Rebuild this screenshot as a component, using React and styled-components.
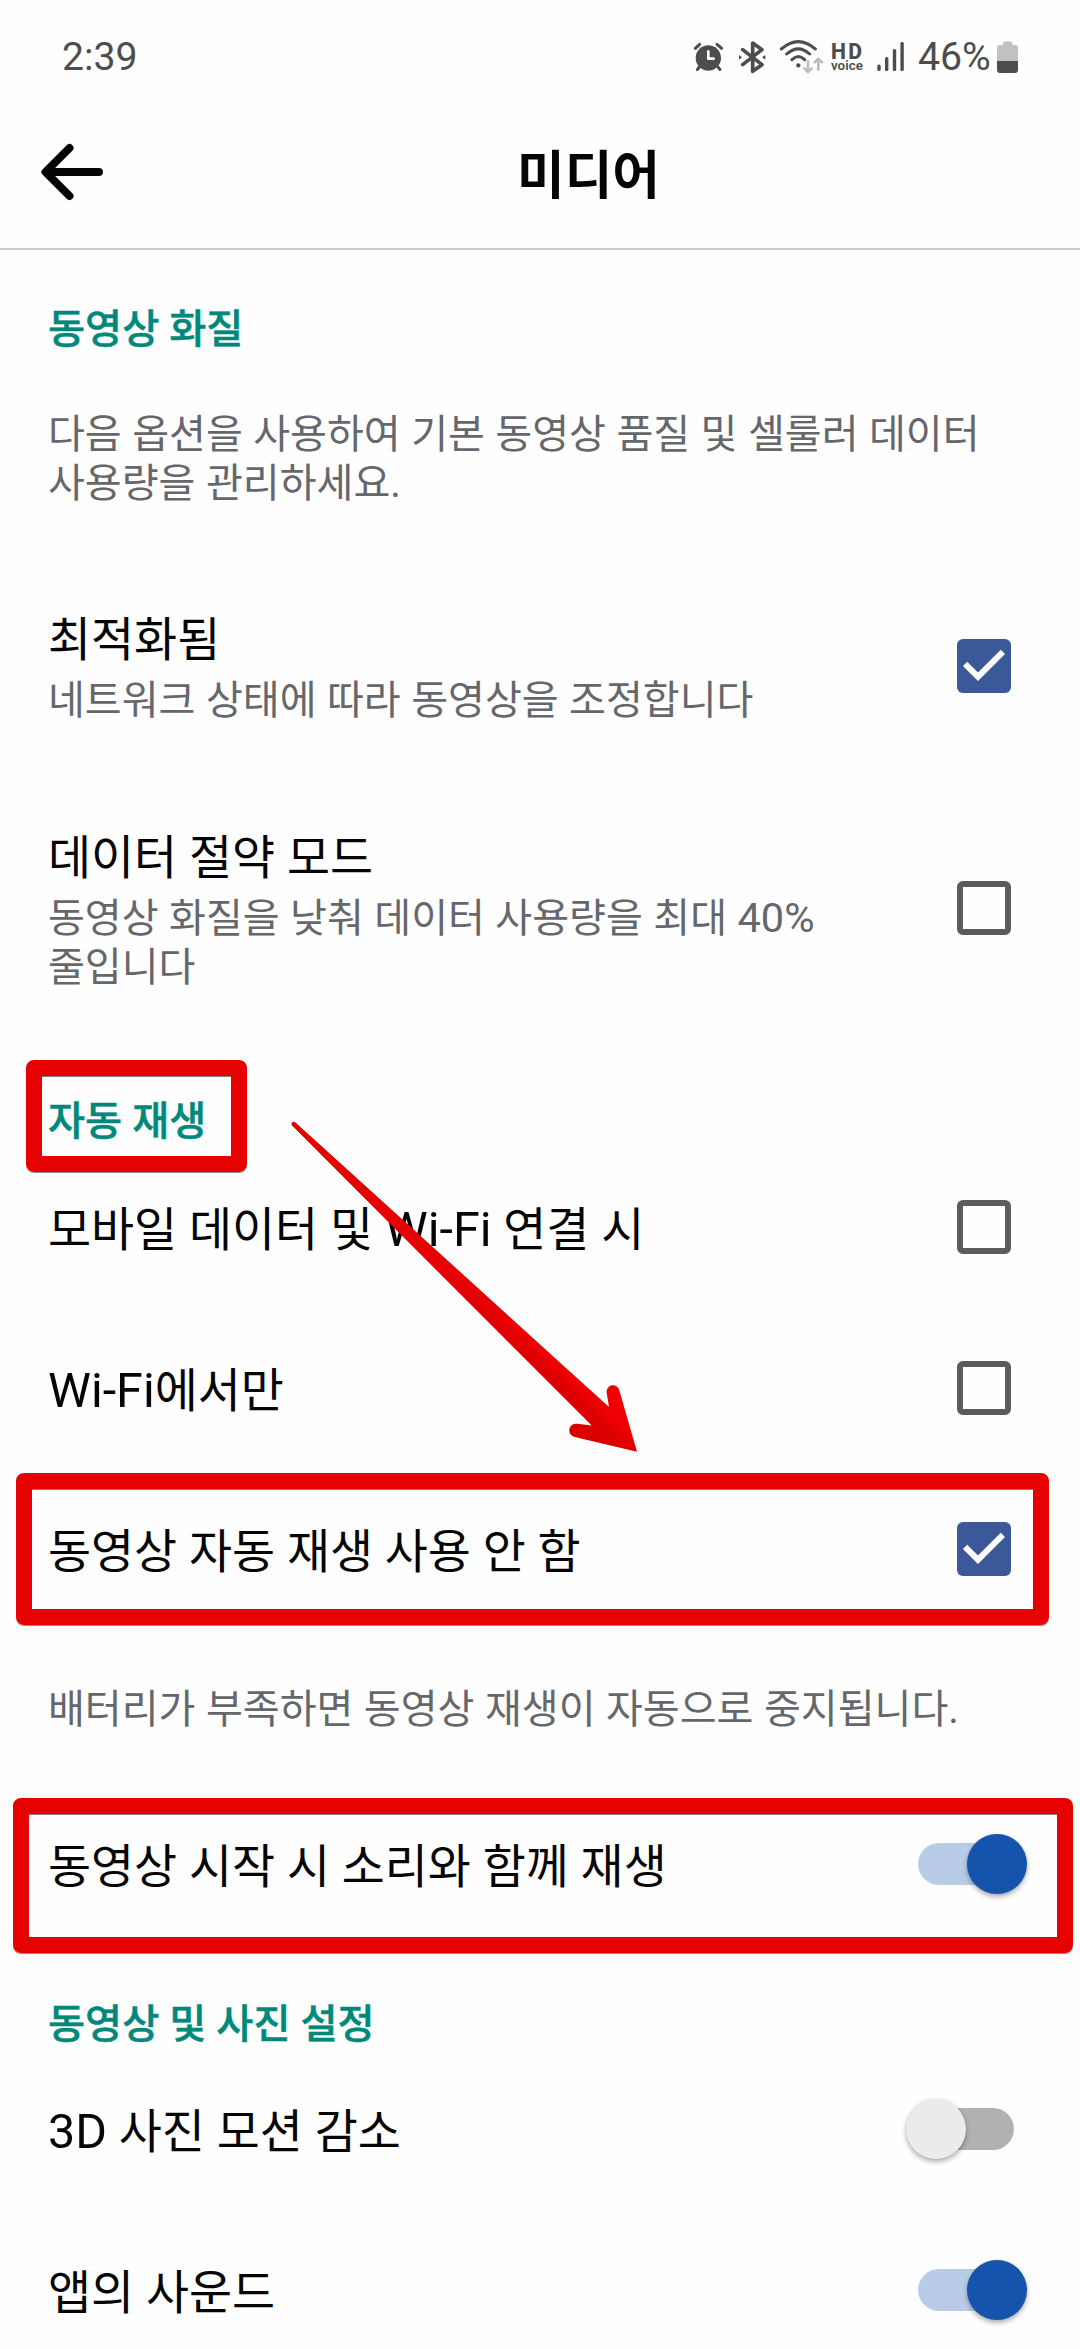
import React from "react";
import styled, { createGlobalStyle } from "styled-components";

const Global = createGlobalStyle`
  html, body { margin: 0; padding: 0; background: #fefefe; }
  *, *::before, *::after { box-sizing: border-box; }
`;

const Screen = styled.div`
  position: relative;
  width: 1080px;
  height: 2349px;
  overflow: hidden;
  background: #fefefe;
  color: #050505;
  font-family: Roboto, "Noto Sans CJK KR", sans-serif;
  display: flex;
  flex-direction: column;
`;

const StatusBar = styled.div`
  flex: none;
  height: 96px;
  padding: 18px 61px 0 62px;
  display: flex;
  align-items: center;
  justify-content: space-between;
  color: #4d4d4d;
  font-size: 39.2px;
  line-height: 78px;
`;

const StatusIcons = styled.div`
  display: flex;
  align-items: center;
`;

const Percent = styled.span`
  margin-left: 13px;
  width: 79px;
`;

const VoiceBadge = styled.div`
  width: 33px;
  margin: 1px 0 0 5px;
  display: flex;
  flex-direction: column;
`;

const VoiceTop = styled.span`
  font-size: 21.2px;
  line-height: 16px;
  font-weight: 800;
  letter-spacing: 2.2px;
`;

const VoiceBottom = styled.span`
  font-size: 13.4px;
  line-height: 12px;
  font-weight: 600;
`;

const AppBar = styled.header`
  flex: none;
  height: 154px;
  padding: 0 40px;
  border-bottom: 2px solid #c9ccd1;
  display: grid;
  grid-template-columns: 64px 1fr 0;
  align-items: center;
`;

const Title = styled.h1`
  margin: -1px 0 0 33px;
  text-align: center;
  font-family: "Noto Sans CJK KR", sans-serif;
  font-size: 51.8px;
  line-height: 64px;
  font-weight: 700;
`;

const Content = styled.main`
  flex: none;
  padding: 0 54px 0 48px;
`;

const SectionTitle = styled.h2`
  margin: 0;
  height: ${(p) => p.$height}px;
  padding-top: ${(p) => p.$top}px;
  color: #00897b;
  font-size: 40.3px;
  line-height: 50px;
  font-weight: 500;
  -webkit-text-stroke: 0.5px #00897b;
`;

const Note = styled.p`
  margin: 0;
  height: ${(p) => p.$height}px;
  padding-top: ${(p) => p.$top}px;
  color: #65676b;
  font-size: 40.1px;
  line-height: 49px;
  word-spacing: 0.5px;
  white-space: pre;
`;

const Row = styled.div`
  height: ${(p) => p.$height || 161}px;
  display: flex;
  align-items: center;
  justify-content: space-between;
`;

const RowText = styled.div`
  padding-top: 6px;
`;

const RowTitle = styled.div`
  font-size: 46.8px;
  line-height: 54px;
  word-spacing: 0.2px;
`;

const RowSub = styled.div`
  margin-top: 9px;
  color: #65676b;
  font-size: 40.1px;
  line-height: 49px;
  word-spacing: 0.5px;
  white-space: pre;
`;

const Latin = styled.span`
  font-size: 1.035em;
  line-height: 1;
`;

const Box = styled.div`
  flex: none;
  width: 54px;
  height: 54px;
  margin-right: 15px;
  border-radius: 6px;
  border: ${(p) => (p.$checked ? "0" : "6px solid #5b5b5b")};
  background: ${(p) => (p.$checked ? "#3b5998" : "transparent")};
`;

const Track = styled.div`
  flex: none;
  width: 96px;
  height: 42px;
  margin-right: 12px;
  border-radius: 21px;
  display: flex;
  align-items: center;
  justify-content: ${(p) => (p.$on ? "flex-end" : "flex-start")};
  background: ${(p) => (p.$on ? "#b8cce8" : "#b1b1b1")};
`;

const Knob = styled.div`
  flex: none;
  width: 60px;
  height: 60px;
  margin: 0 -12.5px;
  border-radius: 50%;
  background: ${(p) => (p.$on ? "#1554ac" : "#ebebeb")};
  box-shadow: 0 3px 5px rgba(0, 0, 0, 0.3), 0 0 2px rgba(0, 0, 0, 0.12);
`;

const Highlight = styled.div`
  position: absolute;
  left: ${(p) => p.$x}px;
  top: ${(p) => p.$y}px;
  width: ${(p) => p.$w}px;
  height: ${(p) => p.$h}px;
  border: 16px solid #e60202;
  border-radius: 8px;
  box-shadow: 0 1px 0 rgba(60, 40, 40, 0.55), inset 0 1px 0 rgba(60, 40, 40, 0.6);
`;

const Pointer = styled.svg`
  position: absolute;
  left: 280px;
  top: 1110px;
`;

const StatusGlyphs = () => (
  <svg width="146" height="40" viewBox="0 11 438 120" fill="none" stroke="#4d4d4d" strokeLinecap="round" strokeLinejoin="round">
    <g>
      <circle cx="85" cy="74" r="38" fill="#4d4d4d" stroke="none" />
      <path d="M46 45L59 33M111 33L125 45M58 101L52 109M114 101L120 109" strokeWidth="9" />
      <path d="M85 54V76H101" stroke="#fefefe" strokeWidth="8" />
    </g>
    <g>
      <path d="M188 49L246 94L218 114V29L246 49L188 94" strokeWidth="11" />
      <path d="M177 65V79L186 72ZM256 65V79L246 72Z" fill="#4d4d4d" stroke="none" />
    </g>
    <g strokeWidth="9">
      <path d="M304 47Q355 3 406 47M320 62Q355 31 389 62M336 79Q355 60 374 79" />
      <circle cx="355" cy="96" r="6.5" fill="#4d4d4d" stroke="none" />
    </g>
    <path d="M384 84V115M373 105L384 116L395 105M415 109V77M404 87L415 76L426 87" stroke="#bdbdbd" strokeWidth="8" />
  </svg>
);

const Signal = styled.svg`
  margin-left: 13px;
`;

const Check = () => (
  <svg width="54" height="54" viewBox="3 3 18 18" display="block">
    <path fill="#fff" d="M10 17l-5-5 1.41-1.41L10 14.17l7.59-7.59L19 8z" />
  </svg>
);

const Checkbox = ({ checked }) => <Box $checked={checked}>{checked && <Check />}</Box>;

const Switch = ({ on }) => (
  <Track $on={on}>
    <Knob $on={on} />
  </Track>
);

const Setting = ({ title, sub, height, children }) => (
  <Row $height={height}>
    <RowText>
      <RowTitle>{title}</RowTitle>
      {sub && <RowSub>{sub}</RowSub>}
    </RowText>
    {children}
  </Row>
);

export default function App() {
  return (
    <Screen>
      <Global />
      <StatusBar>
        <span>2:39</span>
        <StatusIcons>
          <StatusGlyphs />
          <VoiceBadge>
            <VoiceTop>HD</VoiceTop>
            <VoiceBottom>voice</VoiceBottom>
          </VoiceBadge>
          <Signal width="28" height="32" viewBox="0 0 28 32" fill="#4d4d4d">
            <rect x="0.3" y="23.5" width="3.4" height="6.5" rx="1.5" />
            <rect x="8" y="16" width="3.4" height="14" rx="1.5" />
            <rect x="15.8" y="8" width="3.4" height="22" rx="1.5" />
            <rect x="23.4" y="1" width="3.4" height="29" rx="1.5" />
          </Signal>
          <Percent>46%</Percent>
          <svg width="22" height="32" viewBox="0 0 22 32">
            <path d="M6 3Q6 0.5 8.5 0.5H13Q15.5 0.5 15.5 3V4H18Q21 4 21 7V20H0V7Q0 4 3 4H6Z" fill="#c1c1c1" />
            <path d="M0 20H21V29Q21 32 18 32H3Q0 32 0 29Z" fill="#4d4d4d" />
          </svg>
        </StatusIcons>
      </StatusBar>
      <AppBar>
        <svg width="64" height="60" viewBox="0 0 64 60" fill="none" stroke="#050505" strokeWidth="8" strokeLinecap="round" strokeLinejoin="round">
          <path d="M59 30H6M29.5 6L5.5 30L29.5 54" />
        </svg>
        <Title>미디어</Title>
      </AppBar>
      <Content>
        <SectionTitle $height={160} $top={55}>동영상 화질</SectionTitle>
        <Note $height={151} $top={0}>
          {"다음 옵션을 사용하여 기본 동영상 품질 및 셀룰러 데이터\n사용량을 관리하세요."}
        </Note>
        <Setting title="최적화됨" sub="네트워크 상태에 따라 동영상을 조정합니다" height={210}>
          <Checkbox checked />
        </Setting>
        <Setting
          title="데이터 절약 모드"
          sub={<>동영상 화질을 낮춰 데이터 사용량을 최대 <Latin>40%</Latin>{"\n"}줄입니다</>}
          height={274}
        >
          <Checkbox />
        </Setting>
        <SectionTitle $height={101.5} $top={51.5}>자동 재생</SectionTitle>
        <Setting title={<>모바일 데이터 및 <Latin>Wi-Fi</Latin> 연결 시</>}>
          <Checkbox />
        </Setting>
        <Setting title={<><Latin>Wi-Fi</Latin>에서만</>}>
          <Checkbox />
        </Setting>
        <Setting title="동영상 자동 재생 사용 안 함">
          <Checkbox checked />
        </Setting>
        <Note $height={153.5} $top={55}>배터리가 부족하면 동영상 재생이 자동으로 중지됩니다.</Note>
        <Setting title="동영상 시작 시 소리와 함께 재생">
          <Switch on />
        </Setting>
        <SectionTitle $height={104.5} $top={55.5}>동영상 및 사진 설정</SectionTitle>
        <Setting title={<><Latin>3D</Latin> 사진 모션 감소</>}>
          <Switch />
        </Setting>
        <Setting title="앱의 사운드">
          <Switch on />
        </Setting>
      </Content>
      <Highlight $x={26} $y={1060} $w={221} $h={112} />
      <Highlight $x={16} $y={1473} $w={1033} $h={152} />
      <Highlight $x={13} $y={1798} $w={1060} $h={155} />
      <Pointer width="370" height="350" viewBox="280 1110 370 350">
        <defs>
          <linearGradient id="shade" gradientUnits="userSpaceOnUse" x1="586" y1="1436" x2="622" y2="1398">
            <stop offset="0" stopColor="#d90000" />
            <stop offset="0.4" stopColor="#de0000" />
            <stop offset="0.65" stopColor="#f20004" />
            <stop offset="1" stopColor="#f00000" />
          </linearGradient>
          <linearGradient id="length" gradientUnits="userSpaceOnUse" x1="293" y1="1123" x2="560" y2="1378">
            <stop offset="0" stopColor="#e60202" />
            <stop offset="0.45" stopColor="#e60202" />
            <stop offset="1" stopColor="#e60202" stopOpacity="0" />
          </linearGradient>
        </defs>
        <path
          d="M295.5 1122.7L609 1407L606.7 1393A6.4 6.4 0 0 1 619.3 1390.3L637 1451.7L574.7 1437A6.5 6.5 0 0 1 577.3 1423.8L591.7 1425.6L292.3 1125.6A2 2 0 0 1 295.5 1122.7Z"
          fill="url(#shade)"
        />
        <path d="M295.5 1122.7L609 1407L591.7 1425.6L292.3 1125.6A2 2 0 0 1 295.5 1122.7Z" fill="url(#length)" />
      </Pointer>
    </Screen>
  );
}
